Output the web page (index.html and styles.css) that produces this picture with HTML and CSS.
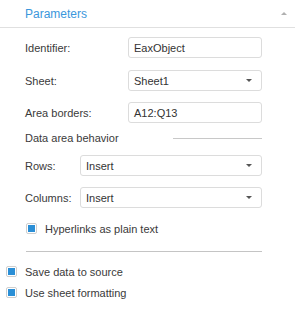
FILE: index.html
```html
<!DOCTYPE html>
<html>
<head>
<meta charset="utf-8">
<link rel="stylesheet" href="styles.css">
</head>
<body>
<div class="panel">
  <div class="header">
    <span class="title">Parameters</span>
    <span class="collapse"></span>
  </div>
  <div class="content">
    <div class="row r1">
      <span class="label">Identifier:</span>
      <div class="field">EaxObject</div>
    </div>
    <div class="row r2">
      <span class="label">Sheet:</span>
      <div class="field select">Sheet1<span class="arrow"></span></div>
    </div>
    <div class="row r3">
      <span class="label">Area borders:</span>
      <div class="field">A12:Q13</div>
    </div>
    <div class="group-title">
      <span class="label">Data area behavior</span>
      <span class="rule"></span>
    </div>
    <div class="row narrow r4">
      <span class="label">Rows:</span>
      <div class="field select">Insert<span class="arrow"></span></div>
    </div>
    <div class="row narrow r5">
      <span class="label">Columns:</span>
      <div class="field select">Insert<span class="arrow"></span></div>
    </div>
    <div class="check indent">
      <span class="box"><span class="tick"></span></span>
      <span class="label">Hyperlinks as plain text</span>
    </div>
    <div class="separator"></div>
  </div>
  <div class="outer">
    <div class="check c1">
      <span class="box"><span class="tick"></span></span>
      <span class="label">Save data to source</span>
    </div>
    <div class="check c2">
      <span class="box"><span class="tick"></span></span>
      <span class="label">Use sheet formatting</span>
    </div>
  </div>
</div>
</body>
</html>
```
FILE: styles.css
```css
html, body {
  margin: 0;
  padding: 0;
  background: #ffffff;
}
body {
  font-family: "Liberation Sans", Arial, sans-serif;
  font-size: 11px;
  color: #3a3a3a;
}
.panel {
  width: 295px;
}
.header {
  height: 27px;
  border-bottom: 1px solid #e0e0e0;
  display: flex;
  align-items: center;
  justify-content: space-between;
  padding: 0 8px 0 25px;
}
.title {
  color: #3b97dc;
  font-size: 12px;
}
.collapse {
  width: 0;
  height: 0;
  border-left: 3px solid transparent;
  border-right: 3px solid transparent;
  border-bottom: 3px solid #b0b0b0;
}
.content {
  padding: 0 33px 0 25px;
}
.row {
  display: grid;
  grid-template-columns: 103px 1fr;
  align-items: center;
  height: 21px;
}
.row.narrow {
  grid-template-columns: 55px 1fr;
}
.r1 { margin-top: 9px; }
.r2 { margin-top: 12px; }
.r3 { margin-top: 11px; }
.r4 { margin-top: 10px; }
.r5 { margin-top: 11px; }
.field {
  height: 21px;
  box-sizing: border-box;
  border: 1px solid #dcdcdc;
  border-radius: 3px;
  padding: 0 5px;
  display: flex;
  align-items: center;
  justify-content: space-between;
  color: #333333;
}
.arrow {
  width: 0;
  height: 0;
  border-left: 3px solid transparent;
  border-right: 3px solid transparent;
  border-top: 3px solid #555555;
  margin-right: 4px;
}
.group-title {
  display: grid;
  grid-template-columns: 148px 1fr;
  align-items: center;
  height: 15px;
  margin-top: 7px;
}
.rule {
  height: 0;
  border-top: 1px solid #c8c8c8;
  margin-top: 2px;
}
.check {
  display: flex;
  align-items: center;
  height: 15px;
}
.check.indent {
  margin-top: 13px;
  padding-left: 1px;
}
.box {
  width: 11px;
  height: 11px;
  box-sizing: border-box;
  border: 1px solid #cfcfcf;
  border-radius: 2px;
  display: flex;
  align-items: center;
  justify-content: center;
  margin-right: 8px;
}
.tick {
  width: 7px;
  height: 7px;
  background: #2b8fd6;
}
.separator {
  height: 0;
  border-top: 1px solid #c4c4c4;
  margin-top: 15px;
  margin-left: 1px;
}
.outer {
  padding-left: 6px;
}
.c1 { margin-top: 12px; }
.c2 { margin-top: 6px; }
```
